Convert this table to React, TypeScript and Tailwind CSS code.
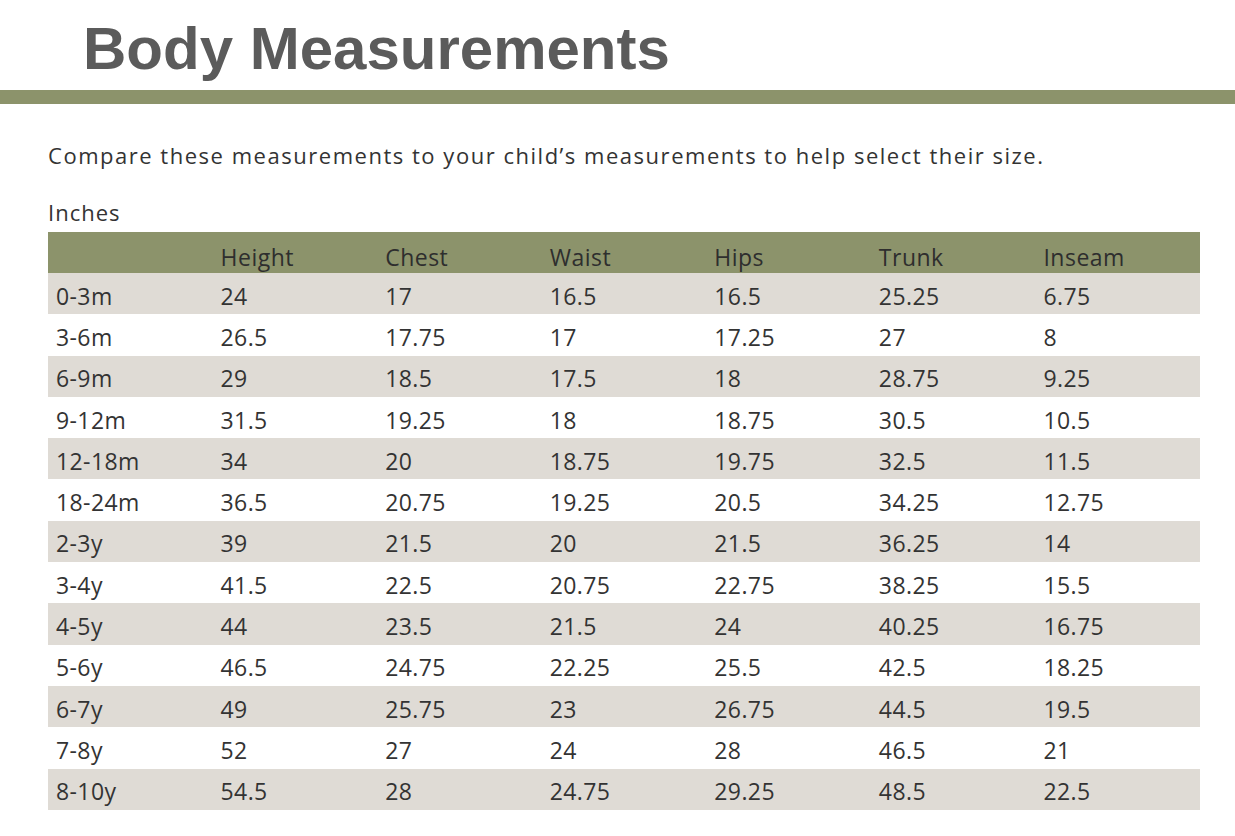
const headers = ['', 'Height', 'Chest', 'Waist', 'Hips', 'Trunk', 'Inseam'];

const rows: string[][] = [
  ['0-3m', '24', '17', '16.5', '16.5', '25.25', '6.75'],
  ['3-6m', '26.5', '17.75', '17', '17.25', '27', '8'],
  ['6-9m', '29', '18.5', '17.5', '18', '28.75', '9.25'],
  ['9-12m', '31.5', '19.25', '18', '18.75', '30.5', '10.5'],
  ['12-18m', '34', '20', '18.75', '19.75', '32.5', '11.5'],
  ['18-24m', '36.5', '20.75', '19.25', '20.5', '34.25', '12.75'],
  ['2-3y', '39', '21.5', '20', '21.5', '36.25', '14'],
  ['3-4y', '41.5', '22.5', '20.75', '22.75', '38.25', '15.5'],
  ['4-5y', '44', '23.5', '21.5', '24', '40.25', '16.75'],
  ['5-6y', '46.5', '24.75', '22.25', '25.5', '42.5', '18.25'],
  ['6-7y', '49', '25.75', '23', '26.75', '44.5', '19.5'],
  ['7-8y', '52', '27', '24', '28', '46.5', '21'],
  ['8-10y', '54.5', '28', '24.75', '29.25', '48.5', '22.5'],
];

export default function App() {
  return (
    <div className="w-[1235px] h-[836px] bg-white overflow-hidden">
      {/* Title */}
      <div className="h-[90px] pl-[83px] pt-[14px]">
        <h1 className="text-[60px] leading-[70px] font-bold text-[#5b5b5b] font-['Liberation_Sans',Arial,sans-serif]">
          Body Measurements
        </h1>
      </div>
      <div className="h-[14px] bg-[#8c936b]" />

      <div className="px-[48px] font-['Open_Sans',sans-serif] text-[#333333]">
        <p className="mt-[37px] text-[22px] leading-[28px] tracking-[1.52px] whitespace-nowrap">
          Compare these measurements to your child’s measurements to help select their size.
        </p>
        <p className="mt-[30px] text-[22px] leading-[26px] tracking-[1px]">Inches</p>

        <div className="mt-[7px] w-[1152px]">
          <div className="grid grid-cols-7 h-[41px] bg-[#8c936b] items-end pb-[1px]">
            {headers.map((h, i) => (
              <div key={i} className="pl-[8px] text-[23px] leading-[30px] tracking-[0.5px] text-[#2e2e2e]">
                {h}
              </div>
            ))}
          </div>
          {rows.map((r, idx) => (
            <div
              key={idx}
              className={`grid grid-cols-7 h-[41.3px] items-center pt-[4px] ${idx % 2 === 0 ? 'bg-[#dfdbd5]' : 'bg-white'}`}
            >
              {r.map((c, i) => (
                <div key={i} className="pl-[8px] text-[23px] leading-[28px] tracking-[0.4px]">
                  {c}
                </div>
              ))}
            </div>
          ))}
        </div>
      </div>
    </div>
  );
}
